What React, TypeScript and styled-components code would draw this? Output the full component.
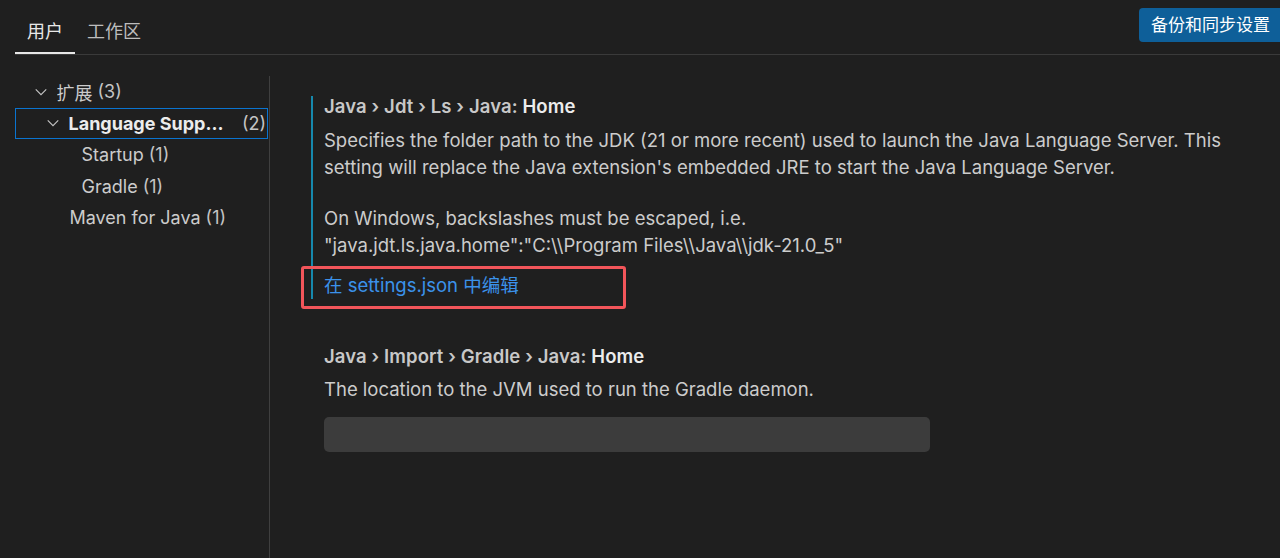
import React from "react";
import styled, { createGlobalStyle } from "styled-components";

const Global = createGlobalStyle`
  html, body { margin: 0; padding: 0; background: #1f1f1f; }
  body { font-family: Inter, "Noto Sans CJK SC", sans-serif; -webkit-font-smoothing: antialiased; }
`;

const FONT = `Inter, "Noto Sans CJK SC", sans-serif`;

const Page = styled.div`
  width: 1280px;
  height: 558px;
  overflow: hidden;
  background: #1f1f1f;
  color: #cccccc;
  font-family: ${FONT};
  display: flex;
  flex-direction: column;
`;

const Header = styled.div`
  display: flex;
  align-items: flex-start;
  justify-content: space-between;
  margin-left: 15px;
  height: 54px;
  border-bottom: 1px solid #3a3a3a;
`;

const Tabs = styled.div`
  display: flex;
  align-self: flex-end;
`;

const Tab = styled.div<{ $active?: boolean }>`
  padding: 11px 12px 0;
  height: 53px;
  line-height: 40px;
  box-sizing: border-box;
  font-size: 18px;
  color: ${(p) => (p.$active ? "#e7e7e7" : "#bdbdbd")};
  border-bottom: 2px solid ${(p) => (p.$active ? "#e7e7e7" : "transparent")};
`;

const SyncButton = styled.div`
  margin-top: 8px;
  height: 34px;
  line-height: 34px;
  padding: 0 10px 0 12px;
  background: #0e5f99;
  color: #ffffff;
  font-size: 17px;
  border-radius: 4px 0 0 4px;
  white-space: nowrap;
`;

const Body = styled.div`
  flex: 1;
  display: flex;
  min-height: 0;
`;

const TreePanel = styled.div`
  width: 254px;
  margin-left: 15px;
  margin-top: 21px;
  border-right: 1px solid #3f3f3f;
`;

const Row = styled.div<{ $level: number; $selected?: boolean }>`
  display: flex;
  align-items: center;
  height: 31.5px;
  box-sizing: border-box;
  padding-left: ${(p) => 6.5 + 12 * p.$level}px;
  padding-right: 1px;
  font-size: 18px;
  color: #cccccc;
  border: 1.5px solid ${(p) => (p.$selected ? "#0a74d0" : "transparent")};
  margin-right: 1px;
`;

const Chevron = styled.span`
  width: 23px;
  flex: 0 0 23px;
  display: flex;
  align-items: center;
  margin-left: -1px;
`;

const Spacer = styled.span`
  width: 23px;
  flex: 0 0 23px;
`;

const Label = styled.span<{ $bold?: boolean }>`
  font-weight: ${(p) => (p.$bold ? 700 : 400)};
  color: ${(p) => (p.$bold ? "#ececec" : "#cccccc")};
  white-space: nowrap;
  overflow: hidden;
  text-overflow: ellipsis;
  min-width: 0;
`;

const Count = styled.span<{ $right?: boolean }>`
  margin-left: ${(p) => (p.$right ? "auto" : "5px")};
  padding-left: ${(p) => (p.$right ? "12px" : "0")};
  white-space: nowrap;
  color: #c4c4c4;
`;

const Content = styled.div`
  flex: 1;
  padding-left: 41px;
  padding-top: 41px;
`;

const Setting = styled.div<{ $focused?: boolean }>`
  position: relative;
  border-left: 2px solid ${(p) => (p.$focused ? "#1689ad" : "transparent")};
  padding-left: 11px;
  margin-bottom: 47px;
`;

const Title = styled.div`
  font-size: 18.5px;
  line-height: 20px;
  font-weight: 600;
  color: #c8c8c8;
  letter-spacing: 0.1px;
`;

const TitleLeaf = styled.span`
  color: #ececec;
`;

const Description = styled.div`
  margin-top: 10.5px;
  font-size: 18.5px;
  line-height: 27px;
  color: #cccccc;
  width: 905px;
`;

const Para = styled.p`
  margin: 0 0 24px;
  &:last-child { margin-bottom: 0; }
`;

const EditLink = styled.div`
  margin-top: 13px;
  font-size: 18.5px;
  line-height: 27px;
  color: #3b92ea;
`;

const Highlight = styled.div`
  position: absolute;
  left: -12px;
  top: 170px;
  width: 325px;
  height: 43px;
  box-sizing: border-box;
  border: 3px solid #f2555a;
  border-radius: 3px;
  pointer-events: none;
`;

const InputBox = styled.div`
  margin-top: 13.5px;
  width: 606px;
  height: 35px;
  background: #3c3c3c;
  border-radius: 5px;
`;

const ChevronDown = () => (
  <svg width="14" height="14" viewBox="0 0 16 16" fill="none">
    <path d="M2 5l6 6 6-6" stroke="#c5c5c5" strokeWidth="1.3" />
  </svg>
);

const Sep = () => <> › </>;

const JSON_EXAMPLE = '"java.jdt.ls.java.home":"C:\\\\Program Files\\\\Java\\\\jdk-21.0_5"';

export default function App() {
  return (
    <>
      <Global />
      <Page>
        <Header>
          <Tabs>
            <Tab $active>用户</Tab>
            <Tab>工作区</Tab>
          </Tabs>
          <SyncButton>备份和同步设置</SyncButton>
        </Header>
        <Body>
          <TreePanel>
            <Row $level={1}>
              <Chevron><ChevronDown /></Chevron>
              <Label>扩展</Label>
              <Count>(3)</Count>
            </Row>
            <Row $level={2} $selected>
              <Chevron><ChevronDown /></Chevron>
              <Label $bold>Language Support for Java(TM) by Red Hat</Label>
              <Count $right>(2)</Count>
            </Row>
            <Row $level={3}>
              <Spacer />
              <Label>Startup</Label>
              <Count>(1)</Count>
            </Row>
            <Row $level={3}>
              <Spacer />
              <Label>Gradle</Label>
              <Count>(1)</Count>
            </Row>
            <Row $level={2}>
              <Spacer />
              <Label>Maven for Java</Label>
              <Count>(1)</Count>
            </Row>
          </TreePanel>
          <Content>
            <Setting $focused>
              <Title>
                Java<Sep />Jdt<Sep />Ls<Sep />Java: <TitleLeaf>Home</TitleLeaf>
              </Title>
              <Description>
                <Para>
                  Specifies the folder path to the JDK (21 or more recent) used to launch the Java Language Server. This setting will replace the Java extension's embedded JRE to start the Java Language Server.
                </Para>
                <Para>
                  On Windows, backslashes must be escaped, i.e.
                  <br />
                  {JSON_EXAMPLE}
                </Para>
              </Description>
              <EditLink>在 settings.json 中编辑</EditLink>
              <Highlight />
            </Setting>
            <Setting>
              <Title>
                Java<Sep />Import<Sep />Gradle<Sep />Java: <TitleLeaf>Home</TitleLeaf>
              </Title>
              <Description>The location to the JVM used to run the Gradle daemon.</Description>
              <InputBox />
            </Setting>
          </Content>
        </Body>
      </Page>
    </>
  );
}
